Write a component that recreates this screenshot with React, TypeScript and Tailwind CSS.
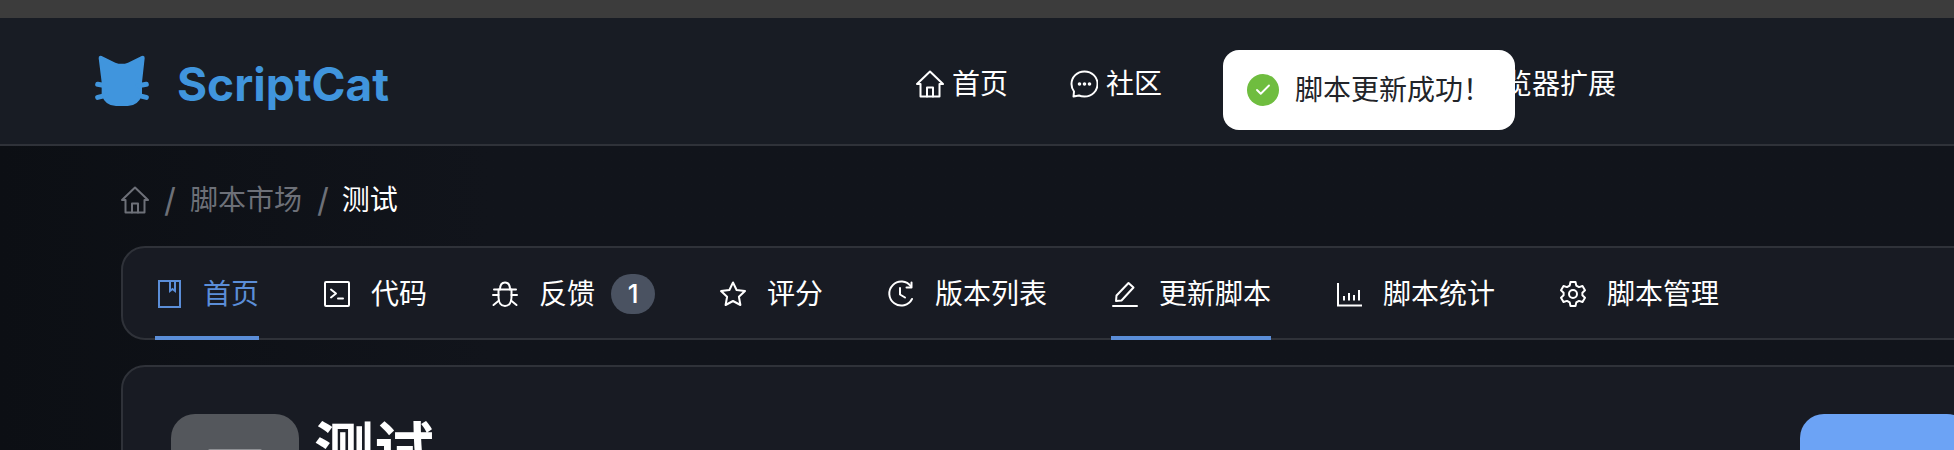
import React from 'react';
import { Check } from 'lucide-react';

type IconProps = { className?: string };

const svgProps = {
  viewBox: '0 0 28 28',
  fill: 'none',
  stroke: 'currentColor',
  strokeWidth: 2,
  strokeLinecap: 'round' as const,
  strokeLinejoin: 'round' as const,
};

function CatLogo() {
  return (
    <svg viewBox="0 0 210 210" className="-mt-[7px] h-[70px] w-[70px] shrink-0" fill="#4095dd">
      <path d="M38 40 Q37 30 47 33 L88 53 Q107 60 126 53 L167 33 Q177 30 176 40 L168 112 L168 150 Q156 183 125 183 L90 183 Q58 183 47 150 L47 112 Z" />
      <g stroke="#4095dd" strokeWidth="15" strokeLinecap="round">
        <path d="M35 118 L60 122" />
        <path d="M35 157 L60 151" />
        <path d="M181 118 L156 122" />
        <path d="M181 157 L156 151" />
      </g>
    </svg>
  );
}

function HomeIcon({ className }: IconProps) {
  return (
    <svg {...svgProps} className={className}>
      <path d="M14 1.5 L27 14 H23.5 V26.5 H4.5 V14 H1 Z" />
      <path d="M11 26.5 V17.5 H17 V26.5" />
    </svg>
  );
}

function ChatIcon({ className }: IconProps) {
  return (
    <svg {...svgProps} className={className}>
      <path d="M14.5 1.5 C7 1.5 1.5 7 1.5 14 C1.5 17 2.5 19.5 4 21.5 L3.5 26.5 L9 25.5 C10.5 26.2 12.5 26.5 14.5 26.5 C22 26.5 27.5 21 27.5 14 C27.5 7 22 1.5 14.5 1.5 Z" />
      <circle cx="9.5" cy="14" r="0.8" fill="currentColor" />
      <circle cx="14.5" cy="14" r="0.8" fill="currentColor" />
      <circle cx="19.5" cy="14" r="0.8" fill="currentColor" />
    </svg>
  );
}

function BookIcon({ className }: IconProps) {
  return (
    <svg {...svgProps} className={className} strokeLinejoin="miter" strokeLinecap="butt">
      <path d="M4 1 H25 V27 H4 Z" />
      <path d="M15 1 V11 L17.5 9 L20 11 V1" />
    </svg>
  );
}

function TerminalIcon({ className }: IconProps) {
  return (
    <svg {...svgProps} className={className}>
      <rect x="2" y="2" width="24" height="24" rx="1" />
      <path d="M8 9.5 L13 13.5 L8 17.5" />
      <path d="M15 18.5 H20" />
    </svg>
  );
}

function BugIcon({ className }: IconProps) {
  return (
    <svg {...svgProps} className={className}>
      <path d="M9 9.5 C9 5 11 2.5 14 2.5 C17 2.5 19 5 19 9.5" />
      <path d="M3 9.5 H25" />
      <path d="M7.5 9.5 V17 C7.5 22.5 10 26 14 26 C18 26 20.5 22.5 20.5 17 V9.5" />
      <path d="M7.5 15 H2" />
      <path d="M20.5 15 H26" />
      <path d="M8 20.5 L2.5 25" />
      <path d="M20 20.5 L25.5 25" />
    </svg>
  );
}

function StarIcon({ className }: IconProps) {
  return (
    <svg {...svgProps} className={className}>
      <path d="M14 2.5 L17.6 10 L26 11.1 L19.9 16.8 L21.4 25 L14 21 L6.6 25 L8.1 16.8 L2 11.1 L10.4 10 Z" />
    </svg>
  );
}

function HistoryIcon({ className }: IconProps) {
  return (
    <svg {...svgProps} className={className}>
      <path d="M24 6.5 A12 12 0 1 0 25 19" />
      <path d="M13 8 V14.5 L18 17.5" />
      <path d="M24.5 2.5 V7.5 H19.5" />
    </svg>
  );
}

function PenIcon({ className }: IconProps) {
  return (
    <svg {...svgProps} className={className}>
      <path d="M2 26 H26" />
      <path d="M5 21 L5.5 15.5 L17.5 3 L22.5 7.5 L10.5 20.5 Z" />
    </svg>
  );
}

function ChartIcon({ className }: IconProps) {
  return (
    <svg {...svgProps} className={className} strokeLinecap="butt" strokeLinejoin="miter">
      <path d="M3 3 V25.5 H27" />
      <path d="M9 16 V20.5" />
      <path d="M14 13 V20.5" />
      <path d="M19 15 V20.5" />
      <path d="M24 10 V20.5" />
    </svg>
  );
}

function GearIcon({ className }: IconProps) {
  return (
    <svg {...svgProps} className={className}>
      <path d="M11.5 2 H16.5 L17.3 5.6 L20 7.1 L23.5 6 L26 10.3 L23.4 12.8 V15.2 L26 17.7 L23.5 22 L20 20.9 L17.3 22.4 L16.5 26 H11.5 L10.7 22.4 L8 20.9 L4.5 22 L2 17.7 L4.6 15.2 V12.8 L2 10.3 L4.5 6 L8 7.1 L10.7 5.6 Z" />
      <circle cx="14" cy="14" r="4" />
    </svg>
  );
}

const navItems = [
  { label: '首页', icon: HomeIcon },
  { label: '社区', icon: ChatIcon },
  { label: '开发文档', icon: BookIcon },
  { label: '浏览器扩展', icon: GearIcon },
];

const tabs = [
  { label: '首页', icon: BookIcon, active: true },
  { label: '代码', icon: TerminalIcon },
  { label: '反馈', icon: BugIcon, badge: 1 },
  { label: '评分', icon: StarIcon },
  { label: '版本列表', icon: HistoryIcon },
  { label: '更新脚本', icon: PenIcon, underline: true },
  { label: '脚本统计', icon: ChartIcon },
  { label: '脚本管理', icon: GearIcon },
];

export default function App() {
  return (
    <div className="relative h-[450px] w-full overflow-hidden bg-linear-to-r from-[#0c0f14] to-[#11141b] to-[25%] font-['Inter','Noto_Sans_CJK_SC',sans-serif] text-[28px] leading-[28px] text-white">
      <div className="h-[18px] bg-[#3c3c3c]" />

      <header className="flex h-[128px] items-center gap-[21px] border-b-2 border-[#2f3239] bg-[#181c24] pt-[5px] pl-[86px]">
        <CatLogo />
        <span className="w-[718px] text-[46px] leading-none font-bold text-[#4095dd]">ScriptCat</span>
        <nav className="flex items-center gap-[62px]">
          {navItems.map((item) => (
            <a key={item.label} className="flex items-center gap-[8px] text-white last:ml-[6px]">
              <item.icon className="h-[28px] w-[28px]" />
              <span>{item.label}</span>
            </a>
          ))}
        </nav>
      </header>

      {/* Toast */}
      <div className="absolute top-[50px] left-[1223px] flex h-[80px] w-[292px] items-center rounded-[16px] bg-white pl-[24px] text-[#222429]">
        <span className="mr-[16px] flex h-[32px] w-[32px] items-center justify-center rounded-full bg-[#6fbd3f] text-white">
          <Check className="h-[18px] w-[18px]" strokeWidth={2.5} />
        </span>
        <span>脚本更新成功！</span>
      </div>

      <main className="pl-[121px]">
        <div className="flex h-[100px] items-center pt-[8px] text-[#6d7078]">
          <HomeIcon className="h-[28px] w-[28px]" />
          <span className="ml-[15px] font-['Inter',sans-serif] text-[33px]">/</span>
          <span className="ml-[14px]">脚本市场</span>
          <span className="ml-[15px] font-['Inter',sans-serif] text-[33px]">/</span>
          <span className="ml-[13px] text-white">测试</span>
        </div>

        <div className="flex h-[94px] w-[1900px] gap-[64px] rounded-[24px] border-2 border-[#2f3239] bg-[#181b23] pl-[32px]">
          {tabs.map((tab) => (
            <div
              key={tab.label}
              className={`flex h-[92px] items-center border-b-4 pt-[3px] ${tab.active ? 'border-[#5b8ed8] text-[#5b8ed8]' : tab.underline ? 'border-[#5b8ed8]' : 'border-transparent'}`}
            >
              <tab.icon className="mr-[20px] h-[28px] w-[28px]" />
              <span>{tab.label}</span>
              {tab.badge && (
                <span className="ml-[16px] flex h-[40px] w-[44px] items-center justify-center rounded-full bg-[#4a5261] text-[26px] font-medium">
                  {tab.badge}
                </span>
              )}
            </div>
          ))}
        </div>

        <div className="mt-[25px] flex h-[300px] w-[1900px] rounded-[24px] border-2 border-[#2f3239] bg-[#181b23] px-[48px] pt-[47px]">
          <div className="flex h-[127px] w-[128px] shrink-0 justify-center rounded-[24px] bg-[#54575c] pt-[35px]">
            <div className="h-[40px] w-[54px] rounded-[2px] bg-[#8e9094]" />
          </div>
          <h1 className="ml-[15px] text-[60px] leading-[72px] font-bold">测试</h1>
          <div className="ml-auto h-[80px] w-[171px] rounded-[24px] bg-[#6ca3f5]" />
        </div>
      </main>
    </div>
  );
}
